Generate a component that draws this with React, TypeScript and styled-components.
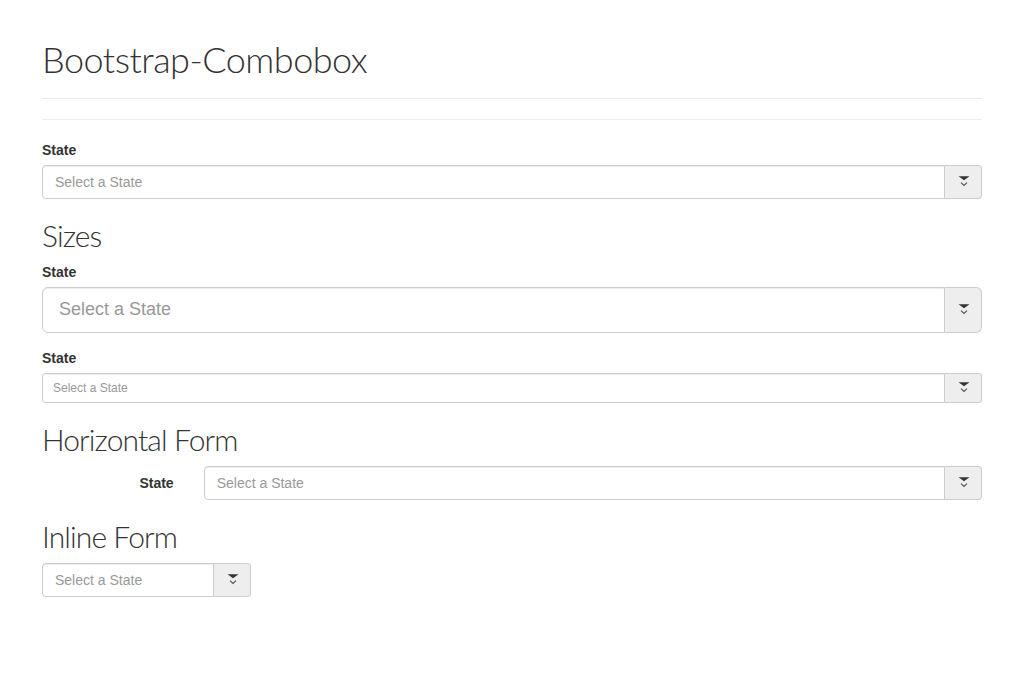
import React from "react";
import styled, { createGlobalStyle, css } from "styled-components";

const GlobalStyle = createGlobalStyle`
  * { box-sizing: border-box; }
  html, body { margin: 0; padding: 0; background: #fff; }
  body {
    font-family: "Liberation Sans", Arial, sans-serif;
    font-size: 14px;
    line-height: 1.42857;
    color: #333;
  }
`;

type Size = "sm" | "md" | "lg";

const Container = styled.div`
  width: 940px;
  margin: 0 auto;
`;

const PageHeader = styled.div`
  margin: 40px 0 20px;
  padding-bottom: 18px;
  border-bottom: 1px solid #eee;
`;

const Title = styled.h1`
  margin: 0;
  font-family: "Lato", "Liberation Sans", sans-serif;
  font-weight: 300;
  font-size: 36px;
  line-height: 39.6px;
  letter-spacing: -0.5px;
  color: #333;
`;

const Rule = styled.hr`
  margin: 20px 0;
  border: 0;
  border-top: 1px solid #eee;
  height: 0;
`;

const SectionTitle = styled.h2`
  margin: 20px 0 10px;
  font-family: "Lato", "Liberation Sans", sans-serif;
  font-weight: 300;
  font-size: 30px;
  line-height: 33px;
  letter-spacing: -0.9px;
  color: #333;
`;

const FormGroup = styled.div`
  margin-bottom: 15px;
`;

const Label = styled.label`
  display: block;
  margin-bottom: 5px;
  font-weight: 700;
  font-size: 14px;
  line-height: 20px;
`;

const HorizontalGroup = styled.div`
  display: grid;
  grid-template-columns: calc((100% + 30px) / 6 - 30px) 1fr;
  column-gap: 30px;
  margin-bottom: 15px;
`;

const HorizontalLabel = styled.label`
  padding-top: 7px;
  text-align: right;
  font-weight: 700;
  font-size: 14px;
  line-height: 20px;
`;

const InputGroup = styled.div<{ $width?: number }>`
  display: flex;
  width: ${(p) => (p.$width ? `${p.$width}px` : "100%")};
`;

const sizeStyles = {
  sm: css`
    height: 30px;
    padding: 5px 10px;
    font-size: 12px;
    border-radius: 3px 0 0 3px;
  `,
  md: css`
    height: 34px;
    padding: 6px 12px;
    font-size: 14px;
    border-radius: 4px 0 0 4px;
  `,
  lg: css`
    height: 46px;
    padding: 10px 16px;
    font-size: 18px;
    border-radius: 6px 0 0 6px;
  `,
};

const TextInput = styled.input<{ $size: Size }>`
  flex: 1;
  min-width: 0;
  margin: 0;
  border: 1px solid #ccc;
  background: #fff;
  color: #555;
  font-family: "Liberation Sans", Arial, sans-serif;
  box-shadow: inset 0 1px 1px rgba(0, 0, 0, 0.075);
  outline: none;
  ${(p) => sizeStyles[p.$size]}
  &::placeholder {
    color: #999;
    opacity: 1;
  }
`;

const Addon = styled.span<{ $size: Size; $width: number }>`
  flex: none;
  width: ${(p) => p.$width}px;
  display: flex;
  align-items: center;
  justify-content: center;
  padding-left: 1px;
  background: #eee;
  border: 1px solid #ccc;
  border-left: 0;
  border-radius: ${(p) => (p.$size === "lg" ? "0 6px 6px 0" : p.$size === "sm" ? "0 3px 3px 0" : "0 4px 4px 0")};
  cursor: pointer;
`;

const CaretIcon = () => (
  <svg width="12" height="11" viewBox="0 0 12 11" aria-hidden="true">
    <polygon points="0.5,0.3 11.5,0.3 6,4.3" fill="#333" />
    <polyline points="3,6.6 6,9.4 9,6.6" fill="none" stroke="#555" strokeWidth="1.2" />
  </svg>
);

const Combobox = ({ size = "md", width, addonWidth = 37 }: { size?: Size; width?: number; addonWidth?: number }) => (
  <InputGroup $width={width}>
    <TextInput $size={size} placeholder="Select a State" />
    <Addon $size={size} $width={addonWidth}>
      <CaretIcon />
    </Addon>
  </InputGroup>
);

export default function App() {
  return (
    <>
      <GlobalStyle />
      <Container>
        <PageHeader>
          <Title>Bootstrap-Combobox</Title>
        </PageHeader>
        <Rule />
        <FormGroup>
          <Label>State</Label>
          <Combobox />
        </FormGroup>

        <SectionTitle>Sizes</SectionTitle>
        <FormGroup>
          <Label>State</Label>
          <Combobox size="lg" />
        </FormGroup>
        <FormGroup>
          <Label>State</Label>
          <Combobox size="sm" />
        </FormGroup>

        <SectionTitle>Horizontal Form</SectionTitle>
        <HorizontalGroup>
          <HorizontalLabel>State</HorizontalLabel>
          <Combobox />
        </HorizontalGroup>

        <SectionTitle>Inline Form</SectionTitle>
        <FormGroup>
          <Combobox width={209} addonWidth={37} />
        </FormGroup>
      </Container>
    </>
  );
}
